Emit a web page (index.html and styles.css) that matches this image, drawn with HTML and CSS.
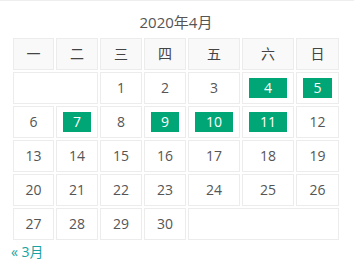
FILE: index.html
```html
<!DOCTYPE html>
<html lang="zh">
<head>
<meta charset="utf-8">
<title>日历</title>
<link rel="stylesheet" href="styles.css">
</head>
<body>
<div class="topline"></div>
<div class="widget">
  <div class="title">2020年4月</div>
  <table class="cal">
    <colgroup>
      <col class="c1"><col class="c2"><col class="c3"><col class="c4"><col class="c5"><col class="c6"><col class="c7">
    </colgroup>
    <thead>
      <tr><th>一</th><th>二</th><th>三</th><th>四</th><th>五</th><th>六</th><th>日</th></tr>
    </thead>
    <tbody>
      <tr><td colspan="2"></td><td>1</td><td>2</td><td>3</td><td><a class="day" href="#">4</a></td><td><a class="day" href="#">5</a></td></tr>
      <tr><td>6</td><td><a class="day" href="#">7</a></td><td>8</td><td><a class="day" href="#">9</a></td><td><a class="day" href="#">10</a></td><td><a class="day" href="#">11</a></td><td>12</td></tr>
      <tr><td>13</td><td>14</td><td>15</td><td>16</td><td>17</td><td>18</td><td>19</td></tr>
      <tr><td>20</td><td>21</td><td>22</td><td>23</td><td>24</td><td>25</td><td>26</td></tr>
      <tr><td>27</td><td>28</td><td>29</td><td>30</td><td colspan="3"></td></tr>
    </tbody>
  </table>
  <div class="nav"><a class="prev" href="#">« 3月</a></div>
</div>
</body>
</html>
```

FILE: styles.css
```css
html, body {
  margin: 0;
  padding: 0;
  background: #fff;
}
body {
  font-family: "Open Sans", "Noto Sans CJK SC", sans-serif;
  font-size: 14px;
  color: #555;
}
.topline {
  height: 1px;
  background: #eeeeee;
}
.widget {
  padding: 0 13px 0 11px;
}
.title {
  margin-top: 11px;
  margin-bottom: 4px;
  line-height: 20px;
  font-size: 15px;
  text-align: center;
  color: #555;
}
.cal {
  width: 330px;
  table-layout: fixed;
  border-collapse: separate;
  border-spacing: 2px;
}
.c1 { width: 41px; }
.c2, .c3, .c4 { width: 42px; }
.c5, .c6 { width: 52px; }
.c7 { width: 43px; }
.cal th,
.cal td {
  box-sizing: border-box;
  height: 32px;
  padding: 5px 6px;
  border: 1px solid #ececec;
  text-align: center;
  vertical-align: middle;
  line-height: 20px;
}
.cal th {
  background: #f9f9f9;
  font-weight: normal;
  color: #444;
}
.cal td {
  background: #fff;
  color: #555;
}
.day {
  display: block;
  height: 20px;
  line-height: 20px;
  background: #00a676;
  color: #fff;
  text-decoration: none;
}
.nav {
  line-height: 20px;
}
.prev {
  color: #17a3a0;
  text-decoration: none;
}
```
